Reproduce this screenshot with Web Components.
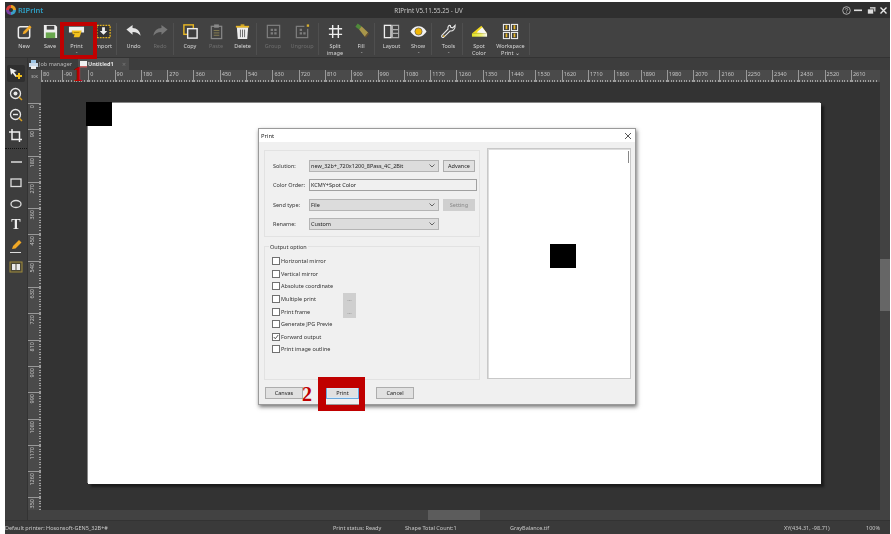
<!DOCTYPE html>
<html>
<head>
<meta charset="utf-8">
<title>RIPrint</title>
<style>
  html, body { margin: 0; height: 100%; background: #fff; overflow: hidden; }
  body { font-family: "Noto Sans", "Liberation Sans", sans-serif; }
</style>
</head>
<body>
<rp-app>
  <rp-titlebar slot="title"></rp-titlebar>
  <rp-toolbar slot="toolbar">
    <rp-tool icon="new" w="26">New</rp-tool>
    <rp-tool icon="save" w="26">Save</rp-tool>
    <rp-tool icon="print" w="27" menu>Print</rp-tool>
    <rp-tool icon="import" w="26">Import</rp-tool>
    <rp-sep></rp-sep>
    <rp-tool icon="undo" w="27">Undo</rp-tool>
    <rp-tool icon="redo" w="26" off>Redo</rp-tool>
    <rp-sep></rp-sep>
    <rp-tool icon="copy" w="26">Copy</rp-tool>
    <rp-tool icon="paste" w="26" off>Paste</rp-tool>
    <rp-tool icon="trash" w="27">Delete</rp-tool>
    <rp-sep></rp-sep>
    <rp-tool icon="group" w="26" off>Group</rp-tool>
    <rp-tool icon="ungroup" w="32" off>Ungroup</rp-tool>
    <rp-sep></rp-sep>
    <rp-tool icon="split" w="26">Split<br>image</rp-tool>
    <rp-tool icon="fill" w="26" menu>Fill</rp-tool>
    <rp-sep></rp-sep>
    <rp-tool icon="layout" w="27">Layout</rp-tool>
    <rp-tool icon="eye" w="26" menu>Show</rp-tool>
    <rp-sep></rp-sep>
    <rp-tool icon="wrench" w="27" menu>Tools</rp-tool>
    <rp-sep></rp-sep>
    <rp-tool icon="spot" w="26">Spot<br>Color</rp-tool>
    <rp-tool icon="workspace" w="37">Workspace<br>Print ⌄</rp-tool>
    <rp-sep></rp-sep>
  </rp-toolbar>
  <rp-sidebar slot="side"></rp-sidebar>
  <rp-tabs slot="tabs"></rp-tabs>
  <rp-ruler slot="hruler" dir="h" first="80" start="-90" count="31"></rp-ruler>
  <rp-ruler slot="vruler" dir="v" first="" start="0" count="15" last="350"></rp-ruler>
  <rp-canvas slot="canvas">
    <rp-print-dialog></rp-print-dialog>
  </rp-canvas>
  <rp-status slot="status"></rp-status>
  <rp-mark slot="marks" n="1" style="--x:60px;--y:22px;--w:37px;--h:37px;--nx:9px;--ny:38px;--b:4px"></rp-mark>
  <rp-mark slot="marks" n="2" style="--x:318px;--y:377px;--w:47px;--h:34px;--nx:-24px;--ny:-4px;--b:11px 6px 6px 8px"></rp-mark>
</rp-app>

<script>
// svg bodies for the toolbar, all on a 18x18 box
const ICONS = {
  new: `<rect x="2.500" y="4" width="12" height="12" rx="2" fill="none" stroke="#eee" stroke-width="1.600"/><path d="M7 12l1-3 6.500-6.500 2 2L10 11z" fill="#f0a826"/>`,
  save: `<path d="M2 2h12l2 2v12H2z" fill="#eee"/><rect x="5" y="3" width="8" height="4" fill="#444"/><rect x="4" y="10" width="10" height="6" fill="#6aa84f"/>`,
  print: `<path d="M1 4h16v6h-3v-1H4v1H1z" fill="#eee"/><path d="M4 8h10.500l-1.500 5-1 2H6l1-3H5z" fill="#f2c01c"/><path d="M6 10h6" stroke="#8a6d00" stroke-width=".7"/>`,
  import: `<rect x="2" y="2.500" width="14" height="13" fill="#333" stroke="#e0b020" stroke-width="1.400" stroke-dasharray="2 1"/><path d="M7.500 4.500h3v4H13L9 12.500 5 8.500h2.500z" fill="#eee"/>`,
  undo: `<path d="M1.500 7L8 2v3.200c4.500 0 8 3 8.500 8.300C14.500 11 12 9.500 8 9.500V12.500z" fill="#e4e4e4"/>`,
  redo: `<path d="M16.500 7L10 2v3.200C5.500 5.200 2 8.200 1.500 13.500 3.500 11 6 9.500 10 9.500V12.500z" fill="#777"/>`,
  copy: `<rect x="2" y="2" width="10" height="10" fill="none" stroke="#e9b824" stroke-width="1.500"/><rect x="6" y="6" width="10" height="10" fill="#3f3f3f" stroke="#eee" stroke-width="1.500"/>`,
  paste: `<rect x="3.500" y="3.500" width="11" height="13" fill="none" stroke="#888" stroke-width="1.300"/><rect x="6.500" y="1.500" width="5" height="3.500" fill="#888"/><path d="M6 8h6M6 10.500h6M6 13h6" stroke="#8a8052" stroke-width="1"/>`,
  trash: `<path d="M3 4.500h12l-1 12.500H4z" fill="#eee"/><path d="M2 3h14v1.800H2z" fill="#e9b824"/><path d="M7 1.500h4V3H7z" fill="#e9b824"/><path d="M6.800 7v8M9 7v8M11.200 7v8" stroke="#555" stroke-width=".9"/>`,
  group: `<rect x="2.500" y="2.500" width="13" height="13" fill="none" stroke="#7d7d7d" stroke-width="1.300"/><path d="M6 6h2.500v2.500H6zM9.800 6h2.500v2.500H9.800zM6 9.800h2.500v2.500H6zM9.800 9.800h2.500v2.500H9.800z" fill="#7d7d7d"/>`,
  ungroup: `<path d="M14.500 6v9.500h-12v-12H11" fill="none" stroke="#7d7d7d" stroke-width="1.300"/><path d="M6 6h2.500v2.500H6zM6 9.800h2.500v2.500H6zM9.800 9.800h2.500v2.500H9.800z" fill="#7d7d7d"/><rect x="13.500" y="1.500" width="2.500" height="2.500" fill="#d8b030"/>`,
  split: `<path d="M6 2v14M12 2v14M2 6h14M2 12h14" stroke="#eee" stroke-width="1.500" fill="none"/>`,
  fill: `<path d="M5 .5l4 3-2.500 3.500-4-3z" fill="#4f8a3a"/><path d="M6.500 7L9 3.500l7 6.500-3.500 4.500z" fill="#a8964a"/><path d="M12.500 14.500l3.500-4.500 1 1-3.500 4.500z" fill="#6b5330"/>`,
  layout: `<rect x="1.500" y="2.500" width="7" height="13" fill="none" stroke="#eee" stroke-width="1.400"/><path d="M10 2.500h6.500v13H10zM10 7h6.500M10 11h6.500" fill="none" stroke="#aaa" stroke-width="1.200"/>`,
  eye: `<path d="M.5 9C3.500 4.500 6 3.500 9 3.500s5.500 1 8.500 5.500c-3 4.500-5.500 5.500-8.500 5.500S3.500 13.500.5 9z" fill="#f2f2f2"/><circle cx="9" cy="9" r="3.800" fill="#f2b705" stroke="#555" stroke-width=".7"/>`,
  wrench: `<path d="M16 2.500l-2.600 2.600-2-.5-.5-2C9 2.200 8 4 8.500 6.300L2 13c-1 1.200.8 3.100 2 2l6.800-6.600c2.400.5 5.500-1.500 5.200-5.900z" fill="none" stroke="#e8e8e8" stroke-width="1.200"/><circle cx="4" cy="13.800" r=".9" fill="#e8b020"/>`,
  spot: `<defs><linearGradient id="sp"><stop offset="0" stop-color="#e4e420"/><stop offset=".6" stop-color="#eef070"/><stop offset="1" stop-color="#f6f6f6"/></linearGradient></defs><path d="M1 11L11 3l6 8z" fill="#f2d81c"/><path d="M6 10L12 4.500l5 6.500z" fill="#f6f6f6"/><path d="M1 11h16v3.500H1z" fill="url(#sp)"/>`,
  workspace: `<rect x="1.500" y="1.500" width="6.500" height="6.500" fill="none" stroke="#eee" stroke-width="1.100"/><rect x="10" y="1.500" width="6.500" height="6.500" fill="none" stroke="#eee" stroke-width="1.100"/><rect x="1.500" y="10" width="6.500" height="6.500" fill="none" stroke="#eee" stroke-width="1.100"/><rect x="10" y="10" width="6.500" height="6.500" fill="none" stroke="#eee" stroke-width="1.100"/><path d="M4.700 2.500v4M13.200 2.500v4M4.700 11v4M13.200 11v4" stroke="#e9b824" stroke-width="1.800"/>`
};

class RpApp extends HTMLElement {
  constructor() {
    super();
    this.attachShadow({ mode: "open" });
    this.shadowRoot.innerHTML = `
      <style>
        :host { display: block; position: relative; box-sizing: border-box; width: 891px; height: 534px; padding: 2px 1px 0 5px; }
        .win { height: 100%; display: grid; grid-template-rows: 16px 40px 1fr 14px; grid-template-columns: 23px 13px 1fr; background: #3d3d3d; color: #ddd; filter: blur(.3px); }
        .top { grid-column: 1 / -1; }
        .side { grid-row: 3; grid-column: 1; }
        .work { grid-row: 3; grid-column: 2 / -1; display: grid; grid-template-rows: 12px 12px 1fr 10px; grid-template-columns: 13px 1fr 10px; min-height: 0; }
        .tabs { grid-column: 1 / -1; }
        .corner { background: #4a4a4a; font-size: 4px; color: #bbb; display: flex; align-items: center; justify-content: center; }
        .corner2 { background: #424242; }
        .hbar { grid-column: 1 / 3; background: #424242; display: flex; align-items: center; padding-left: 400px; }
        .hthumb { width: 52px; height: 10px; background: #5c5c5c; }
        .vbar { background: #424242; padding-top: 177px; box-sizing: border-box; }
        .vthumb { width: 10px; height: 52px; background: #666; }
        .status { grid-column: 1 / -1; }
        ::slotted(rp-canvas) { min-height: 0; }
      </style>
      <div class="win">
        <div class="top"><slot name="title"></slot></div>
        <div class="top"><slot name="toolbar"></slot></div>
        <div class="side"><slot name="side"></slot></div>
        <div class="work">
          <div class="tabs"><slot name="tabs"></slot></div>
          <div class="corner">30K</div>
          <slot name="hruler"></slot>
          <div class="corner2"></div>
          <slot name="vruler"></slot>
          <slot name="canvas"></slot>
          <div class="vbar"><div class="vthumb"></div></div>
          <div class="hbar"><div class="hthumb"></div></div>
          <div class="corner2"></div>
        </div>
        <div class="status"><slot name="status"></slot></div>
      </div>
      <slot name="marks"></slot>`;
  }
}

class RpTitlebar extends HTMLElement {
  constructor() {
    super();
    this.attachShadow({ mode: "open" });
    this.shadowRoot.innerHTML = `
      <style>
        :host { display: flex; align-items: center; height: 16px; background: #2f2f2f; position: relative; font-size: 6.200px; color: #c8c8c8; }
        .logo { display: flex; align-items: center; gap: 2px; margin-left: 1px; color: #2f9fc4; font-size: 7.500px; font-weight: 600; }
        .name { position: absolute; left: 0; right: 0; text-align: center; padding-right: 38px; }
        .btns { margin-left: auto; display: flex; align-items: center; gap: 3.500px; padding-right: 2px; position: relative; }
      </style>
      <div class="logo">
        <svg width="10" height="10" viewBox="0 0 10 10">
          <path d="M5 0a5 5 0 0 1 5 5H5z" fill="#e8a020"/><path d="M10 5a5 5 0 0 1-5 5V5z" fill="#3aa0c8"/>
          <path d="M5 10a5 5 0 0 1-5-5h5z" fill="#7a3fa0"/><path d="M0 5a5 5 0 0 1 5-5v5z" fill="#d83a3a"/>
          <circle cx="5" cy="5" r="2" fill="#2f2f2f"/>
        </svg>RIPrint</div>
      <div class="name">RIPrint V5.11.55.25 - UV</div>
      <div class="btns">
        <svg width="9" height="9" viewBox="0 0 9 9"><circle cx="4.500" cy="4.500" r="3.800" fill="none" stroke="#ccc" stroke-width=".8"/><path d="M3.300 3.500c0-1.500 2.400-1.500 2.400 0 0 1-1.200 1-1.200 2M4.500 6.300v.8" fill="none" stroke="#ccc" stroke-width=".7"/></svg>
        <svg width="9" height="9" viewBox="0 0 9 9"><rect x="0" y="3.500" width="8" height="1.600" fill="#ddd"/></svg>
        <svg width="9" height="9" viewBox="0 0 9 9"><rect x="3" y="1" width="5.500" height="4.500" fill="#bbb"/><rect x=".5" y="3" width="6" height="5" fill="#ddd" stroke="#2f2f2f" stroke-width=".7"/></svg>
        <svg width="9" height="9" viewBox="0 0 9 9"><path d="M1.500 1.500l6 6M7.500 1.500l-6 6" stroke="#e8e8e8" stroke-width="1.400"/></svg>
      </div>`;
  }
}

class RpToolbar extends HTMLElement {
  constructor() {
    super();
    this.attachShadow({ mode: "open" });
    this.shadowRoot.innerHTML = `
      <style>
        :host { display: flex; height: 40px; box-sizing: border-box; padding-left: 6px; background: #424242; border-bottom: 1px solid #333; }
      </style>
      <slot></slot>`;
  }
}

class RpSep extends HTMLElement {
  constructor() {
    super();
    this.attachShadow({ mode: "open" });
    this.shadowRoot.innerHTML = `
      <style>
        :host { display: block; flex: none; width: 1px; margin: 5px 3px 2px 0; background: #4f4f4f; }
      </style>`;
  }
}

class RpTool extends HTMLElement {
  connectedCallback() {
    if (this.shadowRoot) return;
    this.attachShadow({ mode: "open" });
    const w = this.getAttribute("w");
    const off = this.hasAttribute("off");
    const menu = this.hasAttribute("menu");
    this.shadowRoot.innerHTML = `
      <style>
        :host { display: flex; flex: none; flex-direction: column; align-items: center; width: ${w}px; padding-top: 5px; box-sizing: border-box;
          font-size: 5.500px; line-height: 6.800px; text-align: center; color: ${off ? "#6f6f6f" : "#d8d8d8"}; }
        svg { width: 17px; height: 17px; margin-bottom: 3px; flex: none; }
        .m { font-size: 4px; line-height: 3px; color: #bbb; }
      </style>
      <svg viewBox="0 0 18 18">${ICONS[this.getAttribute("icon")]}</svg>
      <div><slot></slot></div>
      ${menu ? `<div class="m">⌄</div>` : ""}`;
  }
}

class RpSidebar extends HTMLElement {
  constructor() {
    super();
    this.attachShadow({ mode: "open" });
    const s = (body) => `<div class="i"><svg width="16" height="16" viewBox="0 0 16 16">${body}</svg></div>`;
    this.shadowRoot.innerHTML = `
      <style>
        :host { display: block; height: 100%; box-sizing: border-box; padding-top: 5px; background: #3d3d3d; border-right: 1px solid #333; }
        .i { height: 21px; display: flex; align-items: center; justify-content: center; }
        .sel { width: 18px; height: 17px; margin: 2px auto; background: #2f2f2f; border-radius: 2px; display: flex; align-items: center; justify-content: center; }
        .dots { border-top: 1px dotted #111; margin: 2px 0 1px; height: 1px; }
        .sel + .i { margin-top: -1px; }
      </style>
      <div class="sel"><svg width="16" height="16" viewBox="0 0 16 16"><path d="M2 2l7 3-3 1 3 4-1.500 1-3-4L3 9z" fill="#eee"/><path d="M11 7v6M8 10h6" stroke="#f2c01c" stroke-width="2"/></svg></div>
      ${s(`<circle cx="7.500" cy="7.500" r="5" fill="none" stroke="#e8e8e8" stroke-width="1.300"/><path d="M11 11l3 3" stroke="#d8a020" stroke-width="1.500"/><circle cx="7.500" cy="7.500" r="2" fill="#e8e8e8"/>`)}
      ${s(`<circle cx="7.500" cy="7.500" r="5" fill="none" stroke="#e8e8e8" stroke-width="1.300"/><path d="M11 11l3 3" stroke="#d8a020" stroke-width="1.500"/><path d="M5 7.500h5" stroke="#e8e8e8" stroke-width="1.400"/>`)}
      ${s(`<path d="M4 1v10.500h10M1 4h10.500V14" fill="none" stroke="#eee" stroke-width="1.500"/>`)}
      <div class="dots"></div>
      ${s(`<path d="M3 8h11" stroke="#ddd" stroke-width="1.500"/>`)}
      ${s(`<rect x="3" y="4" width="10" height="7.500" fill="none" stroke="#ddd" stroke-width="1.300"/>`)}
      ${s(`<ellipse cx="8" cy="8" rx="5" ry="3.500" fill="none" stroke="#ddd" stroke-width="1.300"/>`)}
      <div class="i" style="font:bold 14px 'Liberation Serif',serif;color:#eee">T</div>
      ${s(`<path d="M4 11l1-3 6-6 2.500 2.500-6 6z" fill="#f0a826"/><path d="M2 14.500h11" stroke="#ddd" stroke-width="1"/>`)}
      ${s(`<rect x="2" y="3" width="12" height="10" fill="#4a4636" stroke="#a08c3c" stroke-width="1"/><path d="M4 5h3.500v6H4zM8.500 5H12v6H8.500z" fill="#e8e8e8"/>`)}`;
  }
}

class RpTabs extends HTMLElement {
  constructor() {
    super();
    this.attachShadow({ mode: "open" });
    this.shadowRoot.innerHTML = `
      <style>
        :host { display: flex; align-items: stretch; height: 12px; padding-left: 1px; background: #3d3d3d; font-size: 5.500px; color: #b8b8b8; }
        .t { display: flex; align-items: center; gap: 1px; }
        .job { width: 49px; }
        .cur { width: 51px; padding-left: 2px; box-sizing: border-box; background: #4d4d4d; color: #e4e4e4; font-weight: 700; }
        .x { margin-left: auto; margin-right: 3px; color: #777; font-size: 7px; font-weight: 400; }
      </style>
      <div class="t job">
        <svg width="9" height="9" viewBox="0 0 9 9"><rect x="2" y="0" width="5" height="3" fill="#9cc4e4"/><rect x="0" y="3" width="9" height="4" fill="#c8d8e8"/><rect x="2" y="6" width="5" height="3" fill="#eee"/></svg>
        Job manager</div>
      <div class="t cur">
        <svg width="7" height="7" viewBox="0 0 7 7"><rect width="7" height="5" fill="#f0f0f0"/><rect y="5" width="7" height="1.500" fill="#c86060"/></svg>
        Untitled1<span class="x">×</span></div>`;
  }
}

// ruler: one flex cell per 90 units, the cell border is the long tick
class RpRuler extends HTMLElement {
  connectedCallback() {
    if (this.shadowRoot) return;
    this.attachShadow({ mode: "open" });
    const dir = this.getAttribute("dir");
    const start = Number(this.getAttribute("start"));
    const count = Number(this.getAttribute("count"));
    const first = this.getAttribute("first");
    const last = this.getAttribute("last");
    const h = dir === "h";
    let cells = first ? `<div class="c" style="width:21px"><span>${first}</span></div>` : "";
    for (let i = 0; i < count; i++) cells += `<div class="c"><span>${start + i * 90}</span></div>`;
    if (last) cells += `<div class="c end"><span>${last}</span></div>`;
    this.shadowRoot.innerHTML = `
      <style>
        :host { display: flex; flex-direction: ${h ? "row" : "column"}; overflow: hidden; background: #4a4a4a; font-size: 5.500px; color: #c4c4c4; line-height: 1;
          padding-${h ? "left" : "top"}: ${h ? 0 : 21}px; box-sizing: border-box; min-${h ? "width" : "height"}: 0; }
        .c { flex: none; ${h ? "width" : "height"}: 26.300px; box-sizing: border-box;
          border-${h ? "left" : "top"}: 1px solid #999;
          padding: ${h ? "2px 0 0 1px" : "1px 0 0 2px"};
          background: repeating-linear-gradient(${h ? "90deg" : "180deg"}, #a0a0a0 0, #a0a0a0 1px, transparent 1px, transparent 2.630px)
            ${h ? "left bottom / 100% 2px" : "right top / 2px 100%"} no-repeat; }
        .end { height: 13px; }
        span { display: block; ${h ? "" : "writing-mode: vertical-rl; transform: rotate(180deg);"} white-space: nowrap; }
      </style>
      ${cells}`;
  }
}

class RpCanvas extends HTMLElement {
  constructor() {
    super();
    this.attachShadow({ mode: "open" });
    this.shadowRoot.innerHTML = `
      <style>
        :host { display: block; position: relative; overflow: hidden; background: #333; }
        .sheet { width: 733px; height: 381px; margin: 21px 0 0 47px; background: #fff; box-shadow: -1px -1px 0 #888, 3px 3px 2px #1c1c1c; position: relative; }
        .mark { position: absolute; left: -2px; top: -1px; width: 26px; height: 24px; background: #000; }
      </style>
      <div class="sheet"><div class="mark"></div></div>
      <slot></slot>`;
  }
}

class RpBtn extends HTMLElement {
  constructor() {
    super();
    this.attachShadow({ mode: "open" });
    this.shadowRoot.innerHTML = `
      <style>
        :host { display: inline-flex; align-items: center; justify-content: center; box-sizing: border-box; height: 12px; flex: none;
          background: #e1e1e1; border: 1px solid #adadad; font-size: 5.500px; color: #222; }
        :host([off]) { background: #cfcfcf; border-color: #cfcfcf; color: #888; }
        :host([primary]) { border: 1px solid #6aa8dc; box-shadow: inset 0 0 0 1px #d8e8f5; }
      </style>
      <slot></slot>`;
  }
}

class RpCombo extends HTMLElement {
  constructor() {
    super();
    this.attachShadow({ mode: "open" });
    this.shadowRoot.innerHTML = `
      <style>
        :host { display: flex; align-items: center; box-sizing: border-box; width: 130px; height: 12px; padding: 0 1px;
          background: #dcdcdc; border: 1px solid #b4b4b4; font-size: 5.500px; color: #222; }
        svg { margin-left: auto; margin-right: 2px; }
      </style>
      <slot></slot>
      <svg width="6" height="4" viewBox="0 0 6 4"><path d="M.5.500L3 3 5.500.5" fill="none" stroke="#444" stroke-width=".8"/></svg>`;
  }
}

class RpCheck extends HTMLElement {
  constructor() {
    super();
    this.attachShadow({ mode: "open" });
    const on = this.hasAttribute("checked");
    this.shadowRoot.innerHTML = `
      <style>
        :host { display: flex; align-items: center; gap: 1px; height: 12.600px; font-size: 5.500px; color: #333; white-space: nowrap; }
        .b { box-sizing: border-box; width: 8px; height: 8px; background: #fff; border: 1px solid #707070; flex: none; }
        svg { display: block; }
      </style>
      <div class="b">${on ? `<svg width="6" height="6" viewBox="0 0 6 6"><path d="M.8 3l1.500 1.800L5.200 1" fill="none" stroke="#444" stroke-width=".9"/></svg>` : ""}</div>
      <slot></slot>`;
  }
}

class RpPrintDialog extends HTMLElement {
  constructor() {
    super();
    this.attachShadow({ mode: "open" });
    this.shadowRoot.innerHTML = `
      <style>
        :host { display: flex; flex-direction: column; position: absolute; left: 217px; top: 46px; width: 378px; height: 277px; box-sizing: border-box;
          background: #f0f0f0; border: 1px solid #9a9a9a; box-shadow: 1px 2px 4px rgba(0,0,0,.55); font-size: 5.500px; color: #333; }
        .head { display: flex; align-items: center; justify-content: space-between; height: 13px; flex: none; padding: 0 3px 0 2px; background: #fff; font-size: 5.800px; color: #222; }
        .body { flex: 1; display: flex; gap: 7px; padding: 6px 5px 0 5px; min-height: 0; }
        .left { width: 216px; flex: none; display: flex; flex-direction: column; }
        .box { box-sizing: border-box; border: 1px solid #e2e2e2; }
        .top { height: 87px; margin-top: 2px; padding: 9px 0 0 8px; display: grid; grid-template-columns: 36px 130px 36px; grid-auto-rows: 12px; row-gap: 7.300px; align-items: center; }
        .top rp-btn { width: 32px; margin-left: 4px; }
        .input { box-sizing: border-box; width: 168px; height: 12px; background: #f0f0f0; border: 1px solid #a0a0a0; display: flex; align-items: center; padding: 0 1px; grid-column: span 2; color: #222; }
        .out { position: relative; height: 134px; margin-top: 9px; padding: 8px 0 0 7px; display: flex; flex-direction: column; flex: none; }
        .legend { position: absolute; left: 4px; top: -4px; background: #f0f0f0; padding: 0 1px; color: #333; }
        .row { display: flex; }
        .row rp-check { width: 71px; flex: none; }
        .row rp-btn { width: 13px; height: 12.600px; }
        .preview { width: 144px; height: 231px; box-sizing: border-box; background: #fff; border: 1px solid #c8c8c8; box-shadow: inset 1px 1px 0 #ddd; position: relative; display: flex; align-items: center; justify-content: center; flex: none; }
        .black { width: 26px; height: 24px; background: #000; margin: 0 0 15px 8px; }
        .tick { position: absolute; right: 1px; top: 2px; width: 1px; height: 12px; background: #888; }
        .foot { display: flex; height: 24px; box-sizing: border-box; flex: none; padding: 7px 0 0 6px; }
      </style>
      <div class="head"><span>Print</span>
        <svg width="8" height="8" viewBox="0 0 8 8"><path d="M1 1l6 6M7 1L1 7" stroke="#444" stroke-width=".9"/></svg></div>
      <div class="body">
        <div class="left">
          <div class="box top">
            <span>Solution:</span><rp-combo>new_32b+_720x1200_8Pass_4C_2Bit</rp-combo><rp-btn>Advance</rp-btn>
            <span>Color Order:</span><div class="input">KCMY+Spot Color</div>
            <span>Send type:</span><rp-combo>File</rp-combo><rp-btn off>Setting</rp-btn>
            <span>Rename:</span><rp-combo>Custom</rp-combo>
          </div>
          <div class="box out">
            <div class="legend">Output option</div>
            <rp-check>Horizontal mirror</rp-check>
            <rp-check>Vertical mirror</rp-check>
            <rp-check>Absolute coordinate</rp-check>
            <div class="row"><rp-check>Multiple print</rp-check><rp-btn off>...</rp-btn></div>
            <div class="row"><rp-check>Print frame</rp-check><rp-btn off>...</rp-btn></div>
            <rp-check>Generate JPG Previe</rp-check>
            <rp-check checked>Forward output</rp-check>
            <rp-check>Print image outline</rp-check>
          </div>
        </div>
        <div class="preview"><div class="tick"></div><div class="black"></div></div>
      </div>
      <div class="foot">
        <rp-btn style="width:38px">Canvas</rp-btn>
        <rp-btn primary style="width:33px;margin-left:23px">Print</rp-btn>
        <rp-btn style="width:38px;margin-left:17px">Cancel</rp-btn>
      </div>`;
  }
}

class RpStatus extends HTMLElement {
  constructor() {
    super();
    this.attachShadow({ mode: "open" });
    this.shadowRoot.innerHTML = `
      <style>
        :host { display: flex; align-items: center; height: 14px; background: #3a3a3a; border-top: 1px solid #333; box-sizing: border-box; font-size: 5.500px; color: #c8c8c8; white-space: nowrap; }
        span { flex: none; }
      </style>
      <span style="width:328px">Default printer: Hosonsoft-GEN5_32B+#</span>
      <span style="width:72px">Print status: Ready</span>
      <span style="width:105px">Shape Total Count:1</span>
      <span style="width:274px">GrayBalance.tif</span>
      <span style="width:82px">XY(434.31, -98.71)</span>
      <span>100%</span>`;
  }
}

// red annotation box with its number, lies over the screenshot
class RpMark extends HTMLElement {
  connectedCallback() {
    if (this.shadowRoot) return;
    this.attachShadow({ mode: "open" });
    this.shadowRoot.innerHTML = `
      <style>
        :host { position: absolute; left: var(--x); top: var(--y); width: var(--w); height: var(--h); box-sizing: border-box; border-style: solid; border-width: var(--b); border-color: #c00000; }
        .n { position: absolute; left: var(--nx); top: var(--ny); font: bold 20px/20px "Liberation Serif", serif; color: #c00000; }
      </style>
      <div class="n">${this.getAttribute("n")}</div>`;
  }
}

customElements.define("rp-app", RpApp);
customElements.define("rp-titlebar", RpTitlebar);
customElements.define("rp-toolbar", RpToolbar);
customElements.define("rp-sep", RpSep);
customElements.define("rp-tool", RpTool);
customElements.define("rp-sidebar", RpSidebar);
customElements.define("rp-tabs", RpTabs);
customElements.define("rp-ruler", RpRuler);
customElements.define("rp-canvas", RpCanvas);
customElements.define("rp-btn", RpBtn);
customElements.define("rp-combo", RpCombo);
customElements.define("rp-check", RpCheck);
customElements.define("rp-print-dialog", RpPrintDialog);
customElements.define("rp-status", RpStatus);
customElements.define("rp-mark", RpMark);
</script>
</body>
</html>
